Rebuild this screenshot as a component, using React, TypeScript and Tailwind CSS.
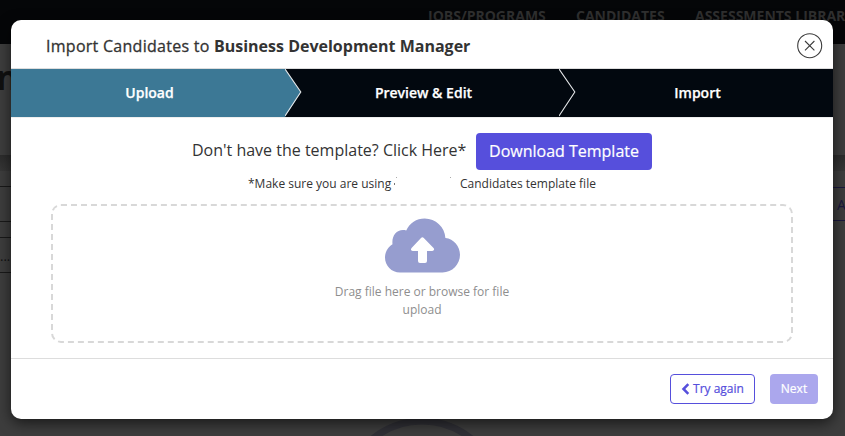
import React from "react";

function Backdrop() {
  return (
    <div className="absolute inset-0 overflow-hidden bg-[#3d3d3d]" aria-hidden="true">
      <div className="h-[44px] bg-[#050608]" />
      <div className="absolute left-[428px] top-[6px] flex gap-[30px] whitespace-nowrap text-[14px] leading-[20px] font-bold text-[#303030]">
        <span className="w-[118px]">JOBS/PROGRAMS</span>
        <span className="w-[89px]">CANDIDATES</span>
        <span>ASSESSMENTS LIBRARY</span>
      </div>
      <div className="absolute -left-[4px] top-[55px] text-[34px] leading-[44px] font-bold text-[#101010]">n</div>
      <div className="absolute left-0 top-[155px] h-[16px] w-full bg-gradient-to-b from-[#2c2c2c] to-[#373737]" />
      <div className="absolute -left-[4px] top-[186px] h-[36px] w-[30px] border-y border-[#191919]" />
      <div className="absolute -left-[4px] top-[237px] h-[36px] w-[30px] border-y border-[#191919]" />
      <div className="absolute left-0 top-[248px] text-[13px] leading-[16px] text-[#111111]">...</div>
      <div className="absolute left-[820px] top-[187px] h-[34px] w-[40px] border-y border-[#1a183d] pl-[17px] text-[14px] leading-[33px] font-medium text-[#1a183d]">
        A
      </div>
      <svg className="absolute left-[340px] top-[410px]" width="164" height="26" viewBox="0 0 164 26">
        <circle cx="82" cy="88" r="77" fill="none" stroke="#303036" strokeWidth="7" />
      </svg>
    </div>
  );
}

function CloseIcon() {
  return (
    <svg width="26" height="26" viewBox="0 0 26 26" fill="none" stroke="#3d3d3d">
      <circle cx="12.7" cy="12.7" r="12" strokeWidth="1.1" />
      <path d="M8 8l9.4 9.4M17.4 8l-9.4 9.4" strokeWidth="1.1" />
    </svg>
  );
}

function CloudIcon() {
  return (
    <svg width="75" height="55" viewBox="0 0 75 55">
      <path
        d="M15 54.5C6.5 54.5 0 47.7 0 39.5C0 34 3 29 7.5 26.2C6.6 18.5 11 12 18 12C19 12 20.2 12.1 21.2 12.5C24.5 5 31.5.4 39.7.4C50.7.4 59.8 9 60.4 19.9C68.7 20.8 75 28 75 36.8C75 46.5 67.2 54.5 57.5 54.5Z"
        fill="#969dcf"
      />
      <path
        d="M36 19.9q1.4-1.3 2.8 0l9.5 9.8q1.3 1.4.5 2.4q-.4.9-1.8.9H42v10q0 2-2 2h-5q-2 0-2-2V33h-5q-1.5 0-1.9-.9q-.6-1 .7-2.4Z"
        fill="#fff"
      />
    </svg>
  );
}

function Chevron({ filled = false }: { filled?: boolean }) {
  return (
    <svg className="absolute left-full top-0 z-10" width="18" height="48" viewBox="0 0 18 48">
      {filled && <path d="M0 0L15.8 23L0 48Z" fill="#3c7895" />}
      <path d="M0 0L15.8 23L0 47" fill="none" stroke="#e5e7e9" strokeWidth="1.1" />
    </svg>
  );
}

function Steps() {
  return (
    <div className="flex h-[48px] shrink-0 bg-[#02080f] text-[14px] font-semibold text-white [-webkit-text-stroke:0.25px_white]">
      <div className="relative flex w-[274px] items-center justify-center bg-[#3c7895] pb-[2px] pl-[3px]">
        Upload
        <Chevron filled />
      </div>
      <div className="relative flex w-[274px] items-center justify-center pb-[2px] pl-[3px]">
        Preview &amp; Edit
        <Chevron />
      </div>
      <div className="flex flex-1 items-center justify-center pb-[2px] pl-[3px]">Import</div>
    </div>
  );
}

export default function App() {
  return (
    <div className="relative h-[436px] w-[845px] overflow-hidden font-['Open_Sans',sans-serif]">
      <Backdrop />
      <div className="relative flex h-full pl-[11px] pt-[20px]">
        <section
          role="dialog"
          className="flex h-[399px] w-[822px] flex-col overflow-hidden rounded-[10px] bg-white text-[#333333] shadow-[0_4px_14px_rgba(0,0,0,0.6)]"
        >
          <header className="flex h-[49px] shrink-0 items-center justify-between border-b border-[#dddddd] pl-[35px] pr-[10px] pt-[3px]">
            <h1 className="flex gap-[4px] text-[16px] leading-[24px] whitespace-nowrap">
              <span className="w-[164px] tracking-[0.27px] [-webkit-text-stroke:0.3px_#333333]">Import Candidates to</span>
              <b className="font-bold">Business Development Manager</b>
            </h1>
            <button aria-label="Close">
              <CloseIcon />
            </button>
          </header>
          <Steps />
          <main className="flex h-[241px] shrink-0 flex-col border-t border-[#eeeeee] px-[40px] pt-[15px]">
            <div className="flex h-[37px] items-center pl-[141px] text-[16px]">
              <span className="w-[284px] whitespace-nowrap pb-[3px]">Don't have the template? Click Here*</span>
              <button className="h-[37px] w-[176px] rounded-[4px] bg-[#564fdc] pb-[2px] text-[16px] whitespace-nowrap text-white [-webkit-text-stroke:0.2px_white]">
                Download Template
              </button>
            </div>
            <p className="flex h-[34px] pl-[197px] pt-[5px] text-[12px] leading-[18px] whitespace-nowrap">
              <span className="w-[146px]">*Make sure you are using</span>
              <span className="flex w-[66px] justify-between pr-[9px]">
                <span className="flex flex-col gap-[5px] pt-[2px]">
                  <i className="ml-[2px] h-px w-px bg-[#aaaaaa]" />
                  <i className="h-[2px] w-px bg-[#777777]" />
                </span>
                <i className="mt-[2px] h-px w-px bg-[#aaaaaa]" />
              </span>
              <span>Candidates template file</span>
            </p>
            <div className="flex h-[139px] w-[742px] flex-col items-center rounded-[10px] border-2 border-dashed border-[#d8d8d8] pt-[12px]">
              <CloudIcon />
              <p className="mt-[10px] w-[190px] text-center text-[12px] leading-[18px] text-[#8e8e8e]">
                Drag file here or browse for file upload
              </p>
            </div>
          </main>
          <footer className="flex h-[61px] shrink-0 justify-end gap-[15px] border-t border-[#dddddd] pr-[15px] pt-[15px] text-[12px]">
            <button className="flex h-[30px] w-[85px] items-center justify-center gap-[3px] rounded-[4px] border border-[#564fdc] text-[#564fdc] [-webkit-text-stroke:0.2px_#564fdc]">
              <svg width="9" height="12" viewBox="0 0 9 12" fill="none" stroke="currentColor" strokeWidth="2.5">
                <path d="M7.3 1.2L2.5 6l4.8 4.8" />
              </svg>
              Try again
            </button>
            <button className="h-[30px] w-[48px] rounded-[4px] bg-[#aba7ed] text-white [-webkit-text-stroke:0.2px_white]">Next</button>
          </footer>
        </section>
      </div>
    </div>
  );
}
